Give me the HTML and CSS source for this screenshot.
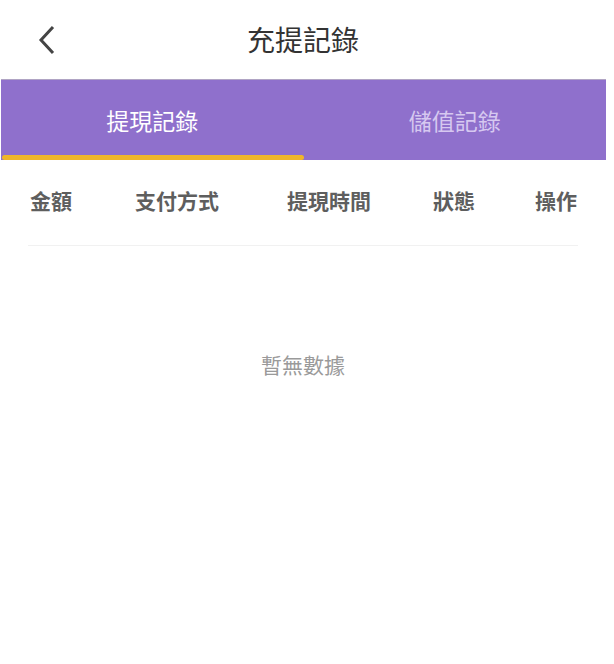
FILE: index.html
```html
<!DOCTYPE html>
<html>
<head>
<meta charset="utf-8">
<title>充提記錄</title>
<link rel="stylesheet" href="styles.css">
</head>
<body>
<div class="page">
	<div class="topbar">
		<a class="back" href="#">
			<svg width="22" height="30" viewBox="0 0 22 30"><path d="M17 2 L5 15 L17 28" fill="none" stroke="#444" stroke-width="3"/></svg>
		</a>
		<h1>充提記錄</h1>
	</div>

	<div class="tabs">
		<div class="tab active">提現記錄</div>
		<div class="tab">儲值記錄</div>
	</div>

	<div class="thead">
		<span>金額</span>
		<span>支付方式</span>
		<span>提現時間</span>
		<span>狀態</span>
		<span>操作</span>
	</div>

	<p class="empty">暫無數據</p>
</div>
</body>
</html>
```
FILE: styles.css
```css
* {
	font-family: "Noto Sans CJK TC", "Noto Sans CJK SC", sans-serif;
	box-sizing: border-box;
}

body {
	margin: 0;
	background: #fff;
}

.page {
	width: 606px;
}

.topbar {
	height: 79px;
	display: flex;
	align-items: center;
	justify-content: center;
	position: relative;
	padding-bottom: 2px;
}

.back {
	position: absolute;
	left: 36px;
	top: 25px;
}

h1 {
	margin: 0;
	font-size: 28px;
	font-weight: normal;
	color: #333;
	line-height: 1;
}

.tabs {
	display: flex;
	margin-left: 1px;
	height: 81px;
	background: #8f70cc;
	border-top: 1px solid #b0a4c4;
}

.tab {
	flex: 1;
	display: flex;
	align-items: center;
	justify-content: center;
	font-size: 23px;
	color: #d6c8f0;
	position: relative;
	padding-bottom: 1px;
}

.tab.active {
	color: #fff;
}

.tab.active:after {
	content: "";
	position: absolute;
	left: 1px;
	right: 0;
	bottom: 0;
	height: 5px;
	border-radius: 3px;
	background: #efb62a;
}

.thead {
	margin: 0 28px;
	height: 86px;
	display: grid;
	grid-template-columns: 105px 152px 146px 102px auto;
	align-items: center;
	padding: 0 0 6px 2px;
	border-bottom: 1px solid #f1f1f1;
}

.thead span {
	font-size: 21px;
	font-weight: bold;
	color: #5e5e5e;
}

.empty {
	margin: 103px 0 0;
	text-align: center;
	font-size: 21px;
	color: #9a9a9a;
}
```
